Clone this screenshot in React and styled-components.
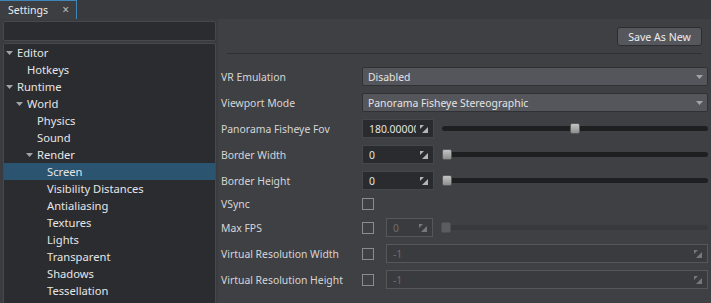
import React from 'react';
import styled, { createGlobalStyle } from 'styled-components';

const GlobalStyle = createGlobalStyle`
    body {
        margin: 0;
        background: #3b3c40;
    }
    * {
        box-sizing: border-box;
    }
`;

const treeItems = [
    { label: 'Editor', level: 0, open: true },
    { label: 'Hotkeys', level: 1 },
    { label: 'Runtime', level: 0, open: true },
    { label: 'World', level: 1, open: true },
    { label: 'Physics', level: 2 },
    { label: 'Sound', level: 2 },
    { label: 'Render', level: 2, open: true },
    { label: 'Screen', level: 3, selected: true },
    { label: 'Visibility Distances', level: 3 },
    { label: 'Antialiasing', level: 3 },
    { label: 'Textures', level: 3 },
    { label: 'Lights', level: 3 },
    { label: 'Transparent', level: 3 },
    { label: 'Shadows', level: 3 },
    { label: 'Tessellation', level: 3 },
];

const SpinIcon = ({ disabled }) => (
    <svg width="8" height="8" viewBox="0 0 8 8">
        <g fill={disabled ? '#77787b' : '#b4b5b8'}>
            <polygon points="0,0 4,0 0,4" />
            <polygon points="8,2 8,8 2,8" />
        </g>
    </svg>
);

const Arrow = () => (
    <svg width="7" height="4" viewBox="0 0 7 4">
        <polygon points="0,0 7,0 3.5,4" fill="#a2a3a6" />
    </svg>
);

const Slider = ({ value, disabled }) => (
    <Track disabled={disabled}>
        <Thumb disabled={disabled} style={{ left: `calc((100% - 10px) * ${value})` }} />
    </Track>
);

const Spin = ({ value, width, disabled }) => (
    <SpinBox width={width} disabled={disabled}>
        <SpinText>{value}</SpinText>
        <SpinIcon disabled={disabled} />
    </SpinBox>
);

export default function App() {
    return (
        <Root>
            <GlobalStyle />
            <TabBar>
                <Tab>
                    <span>Settings</span>
                    <Close>×</Close>
                </Tab>
            </TabBar>
            <Body>
                <Side>
                    <Search />
                    <Tree>
                        {treeItems.map(item => (
                            <TreeRow key={item.label} level={item.level} selected={item.selected}>
                                <Toggle>{item.open && <Arrow />}</Toggle>
                                {item.label}
                            </TreeRow>
                        ))}
                    </Tree>
                </Side>
                <Main>
                    <Header>
                        <SaveButton>Save As New</SaveButton>
                    </Header>
                    <Separator />
                    <Form>
                        <Label>VR Emulation</Label>
                        <Combo>
                            <span>Disabled</span>
                            <Arrow />
                        </Combo>

                        <Label>Viewport Mode</Label>
                        <Combo>
                            <span>Panorama Fisheye Stereographic</span>
                            <Arrow />
                        </Combo>

                        <Label>Panorama Fisheye Fov</Label>
                        <Controls>
                            <Spin value="180.000000" width={72} />
                            <Slider value={0.5} />
                        </Controls>

                        <Label>Border Width</Label>
                        <Controls>
                            <Spin value="0" width={72} />
                            <Slider value={0} />
                        </Controls>

                        <Label>Border Height</Label>
                        <Controls>
                            <Spin value="0" width={72} />
                            <Slider value={0} />
                        </Controls>

                        <Label>VSync</Label>
                        <Controls>
                            <Check />
                        </Controls>

                        <Label>Max FPS</Label>
                        <Controls>
                            <Check />
                            <Spin value="0" width={47} disabled />
                            <Slider value={0} disabled />
                        </Controls>

                        <Label>Virtual Resolution Width</Label>
                        <Controls>
                            <Check />
                            <LineEdit>
                                <span>-1</span>
                                <SpinIcon disabled />
                            </LineEdit>
                        </Controls>

                        <Label>Virtual Resolution Height</Label>
                        <Controls>
                            <Check />
                            <LineEdit>
                                <span>-1</span>
                                <SpinIcon disabled />
                            </LineEdit>
                        </Controls>
                    </Form>
                </Main>
            </Body>
        </Root>
    );
}

const Root = styled.div`
    width: 711px;
    height: 303px;
    display: flex;
    flex-direction: column;
    overflow: hidden;
    background: #3b3c40;
    color: #dcdcdc;
    font-family: "Noto Sans", "Open Sans", sans-serif;
    font-size: 10.4px;
`;

const TabBar = styled.div`
    height: 19px;
    display: flex;
    background: #393a3e;
`;

const Tab = styled.div`
    width: 77px;
    display: flex;
    align-items: center;
    justify-content: space-between;
    padding: 0 7px 1px 8px;
    background: #3d3e42;
    border-top: 1px solid #3e86b8;
    border-right: 1px solid #3e86b8;
    color: #ececec;
    font-size: 10.5px;
`;

const Close = styled.span`
    font-size: 12px;
    color: #b8b9bc;
`;

const Body = styled.div`
    flex: 1;
    display: flex;
    min-height: 0;
`;

const Side = styled.div`
    width: 218px;
    display: flex;
    flex-direction: column;
    gap: 2px;
    padding: 2px 2px 0 3px;
`;

const Search = styled.div`
    height: 20px;
    background: #2b2c2f;
    border: 1px solid #47484c;
    border-radius: 2px;
`;

const Tree = styled.div`
    flex: 1;
    background: #2b2c2f;
    border: 1px solid #47484c;
    border-bottom: none;
    border-radius: 2px 2px 0 0;
    overflow: hidden;
`;

const TreeRow = styled.div`
    height: 17px;
    display: flex;
    align-items: center;
    padding-left: ${props => props.level * 10 + 2}px;
    background: ${props => props.selected ? '#2a546f' : 'transparent'};
    color: #e6e6e6;
    font-size: 11.2px;
    white-space: nowrap;
`;

const Toggle = styled.span`
    width: 11px;
    flex-shrink: 0;
    display: flex;
    align-items: center;
    margin-top: 1px;
`;

const Main = styled.div`
    flex: 1;
    display: flex;
    flex-direction: column;
    background: #3f4044;
    padding: 8px 3px 0 3px;
`;

const Header = styled.div`
    display: flex;
    justify-content: flex-end;
    padding-right: 6px;
`;

const SaveButton = styled.div`
    width: 85px;
    height: 19px;
    display: flex;
    align-items: center;
    justify-content: center;
    background: #56575c;
    border: 1px solid #2c2d30;
    border-radius: 3px;
    color: #ececec;
    font-size: 10.6px;
`;

const Separator = styled.div`
    height: 1px;
    margin: 7px 6px 13px 6px;
    background: #2f3033;
`;

const Form = styled.div`
    display: grid;
    grid-template-columns: 141px 1fr;
    row-gap: 7px;
    align-items: center;
`;

const Label = styled.div`
    color: #d6d6d6;
    white-space: nowrap;
`;

const Combo = styled.div`
    height: 19px;
    display: flex;
    align-items: center;
    justify-content: space-between;
    padding: 0 4px 0 5px;
    background: #55565b;
    border: 1px solid #303134;
    border-radius: 2px;
    color: #e4e4e4;
`;

const Controls = styled.div`
    display: flex;
    align-items: center;
    gap: 8px;
`;

const SpinBox = styled.div`
    width: ${props => props.width}px;
    height: 19px;
    flex-shrink: 0;
    display: flex;
    align-items: center;
    gap: 4px;
    padding: 0 5px 0 6px;
    background: ${props => props.disabled ? '#3a3b3e' : '#2a2b2e'};
    border: 1px solid ${props => props.disabled ? '#56575b' : '#46474b'};
    color: ${props => props.disabled ? '#6c6d70' : '#e4e4e4'};
`;

const SpinText = styled.span`
    flex: 1;
    overflow: hidden;
    white-space: nowrap;
`;

const Track = styled.div`
    position: relative;
    flex: 1;
    height: 5px;
    border-radius: 3px;
    background: ${props => props.disabled ? '#38393c' : '#1e1f21'};
`;

const Thumb = styled.div`
    position: absolute;
    top: -3px;
    width: 10px;
    height: 11px;
    border-radius: 2px;
    background: ${props => props.disabled
        ? '#5b5c5f'
        : 'linear-gradient(#c4c4c4, #8e8e8e)'};
    border: 1px solid ${props => props.disabled ? '#4c4d50' : '#5a5a5a'};
`;

const Check = styled.div`
    width: 12px;
    height: 12px;
    flex-shrink: 0;
    margin-right: 4px;
    border: 1px solid #8a8b8e;
`;

const LineEdit = styled.div`
    flex: 1;
    height: 19px;
    display: flex;
    align-items: center;
    justify-content: space-between;
    padding: 0 5px 0 6px;
    background: #3a3b3e;
    border: 1px solid #56575b;
    color: #6c6d70;
`;
